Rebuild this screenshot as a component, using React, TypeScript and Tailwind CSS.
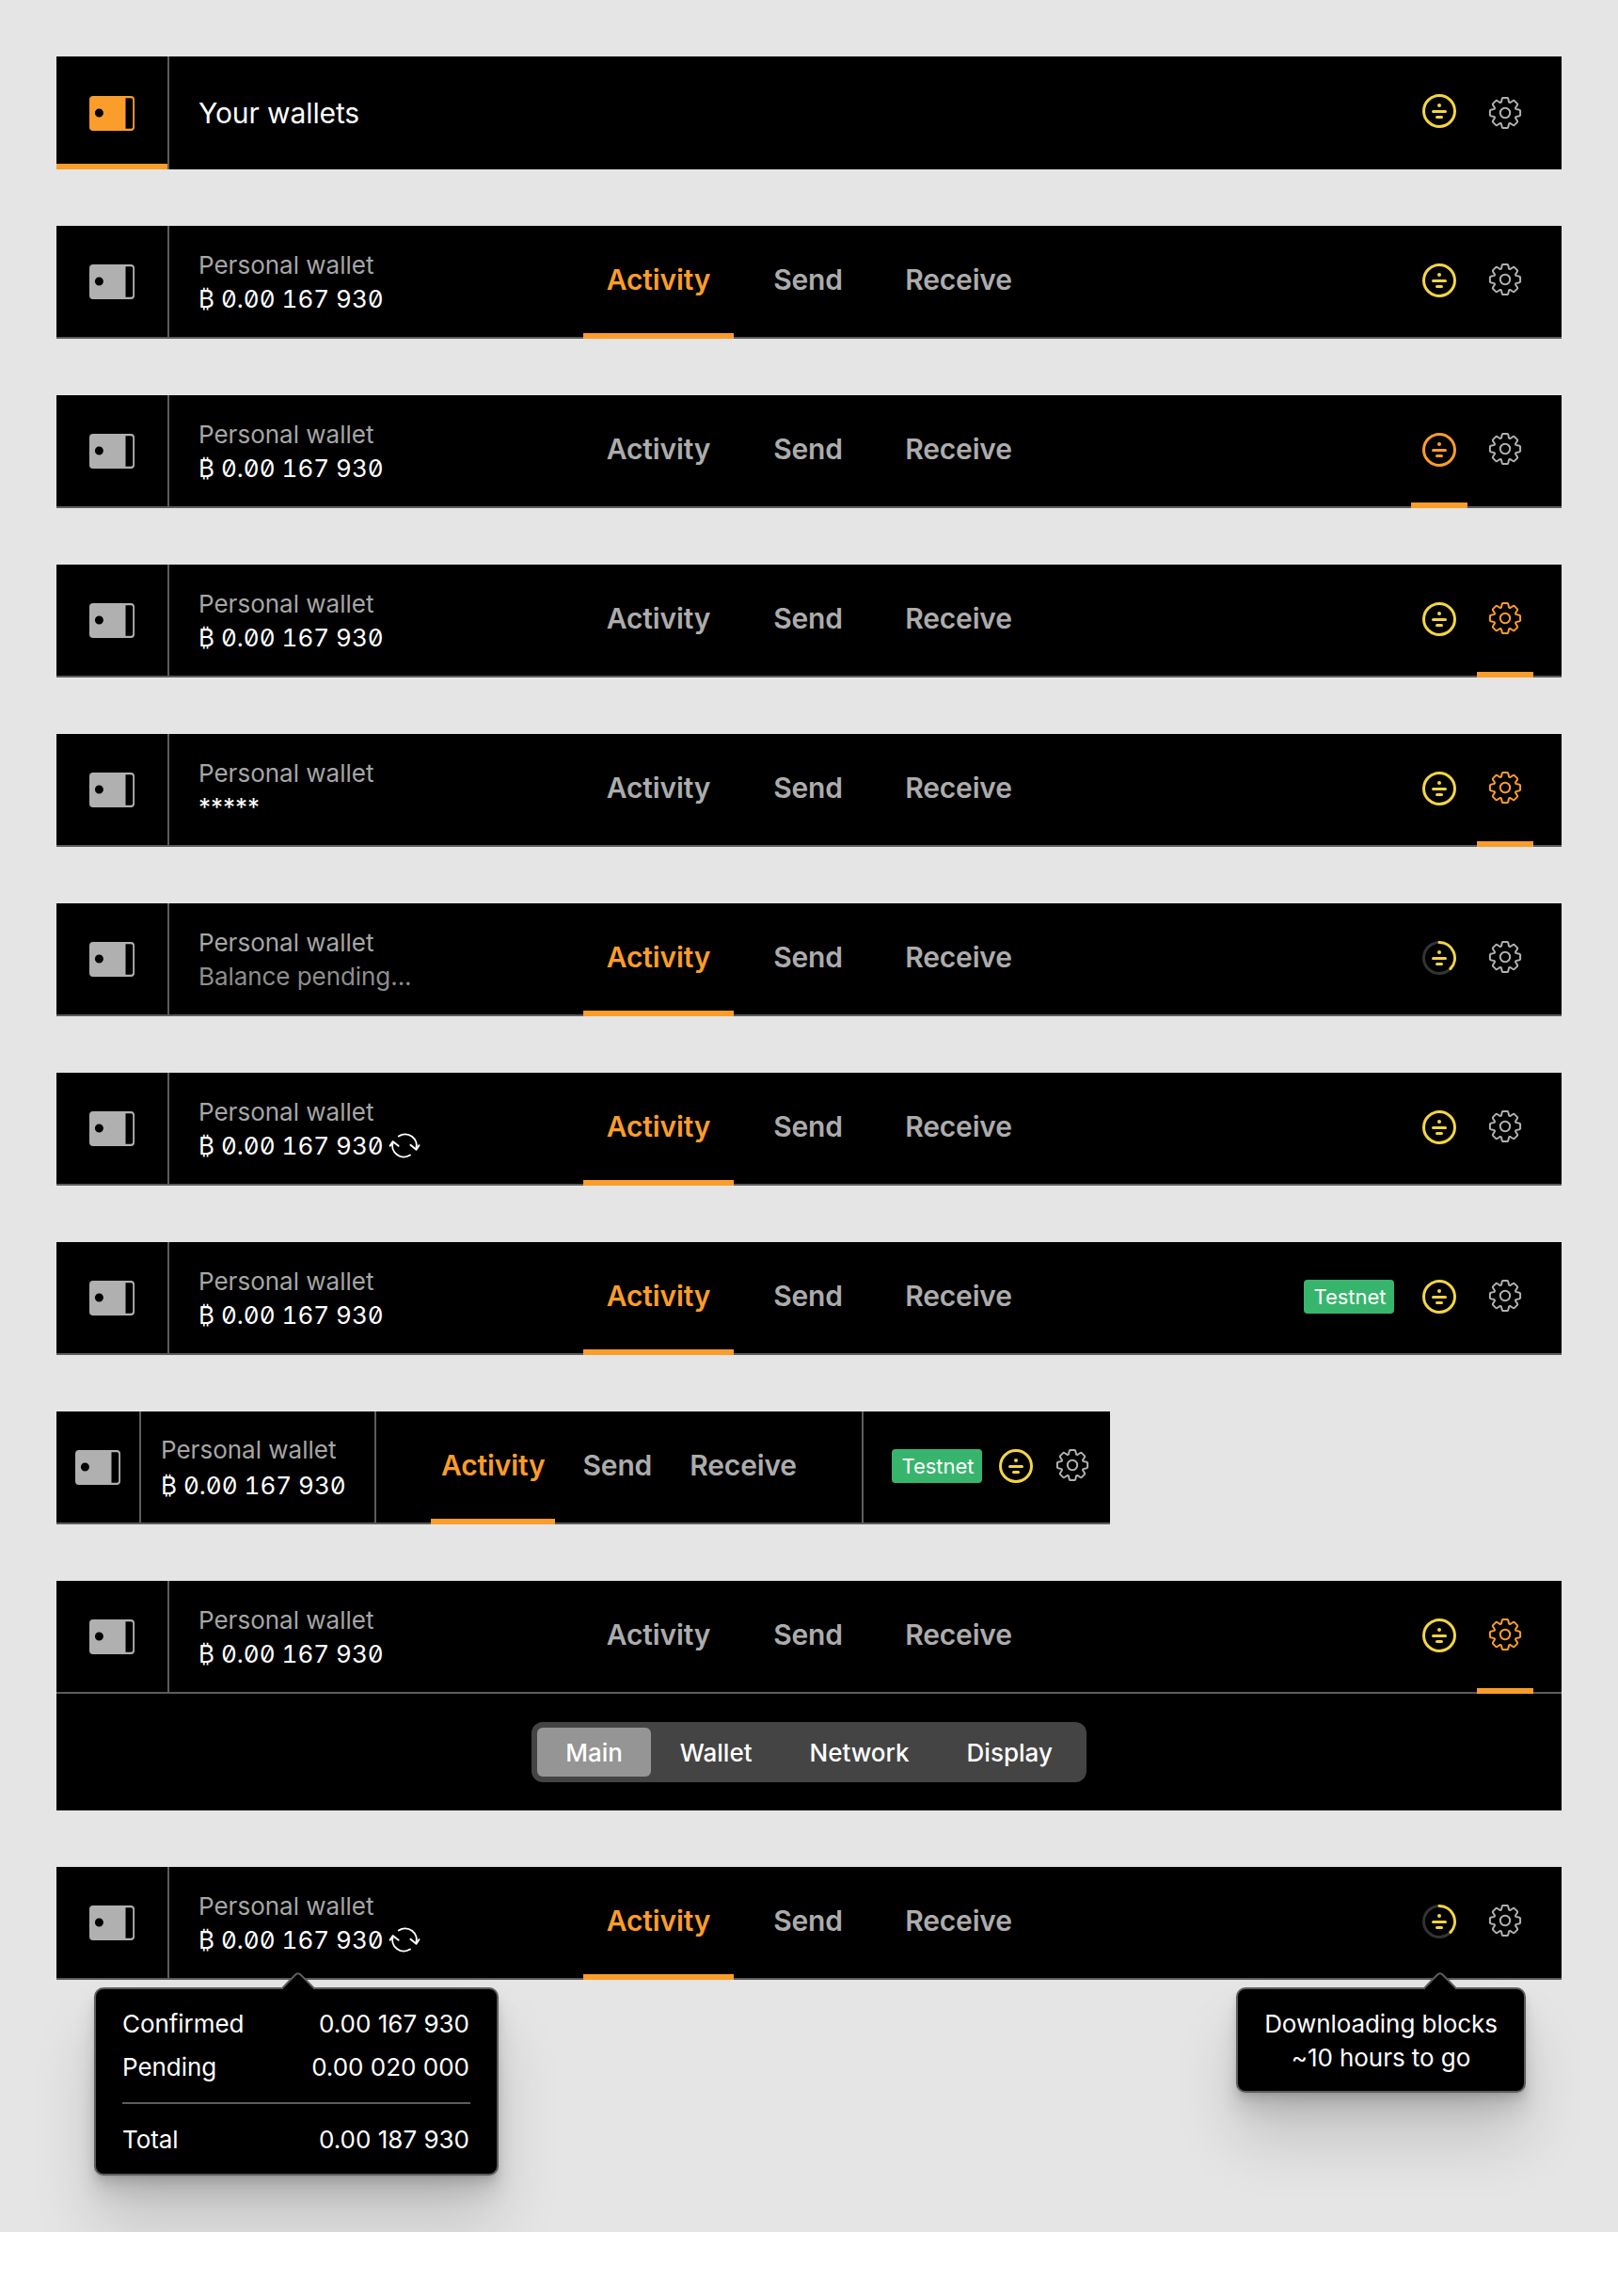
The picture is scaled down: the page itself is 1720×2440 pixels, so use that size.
import type { ReactNode } from 'react'
import clsx from 'clsx'

type Section = 'Activity' | 'Send' | 'Receive'

const SECTIONS: Section[] = ['Activity', 'Send', 'Receive']

function WalletIcon({ className }: { className?: string }) {
  return (
    <svg viewBox="0 0 48 37" className={clsx('h-[37px] w-12', className)} fill="currentColor">
      <path
        fillRule="evenodd"
        d="M4 0H44a4 4 0 0 1 4 4V33a4 4 0 0 1-4 4H4a4 4 0 0 1-4-4V4a4 4 0 0 1 4-4ZM38.5 2.2V34.8H44.2a2 2 0 0 0 2-2V4.2a2 2 0 0 0-2-2ZM10.4 13.5a4.5 4.5 0 1 0 0 9a4.5 4.5 0 0 0 0-9Z"
      />
    </svg>
  )
}

const GEAR_ANGLES = [0, 45, 90, 135, 180, 225, 270, 315]

function gearOutline() {
  const tooth: [number, number][] = [
    [-4.1, -11.4],
    [-3.2, -15.2],
    [-2.5, -16.1],
    [2.5, -16.1],
    [3.2, -15.2],
    [4.1, -11.4],
  ]
  const points = GEAR_ANGLES.flatMap((deg) => {
    const a = (deg * Math.PI) / 180
    return tooth.map(([x, y]) => {
      const px = 17 + x * Math.cos(a) - y * Math.sin(a)
      const py = 17 + x * Math.sin(a) + y * Math.cos(a)
      return `${px.toFixed(2)} ${py.toFixed(2)}`
    })
  })
  return `M${points.join('L')}Z`
}

const GEAR_PATH = gearOutline()

function GearIcon({ className }: { className?: string }) {
  return (
    <svg
      viewBox="0 0 34 34"
      className={clsx('size-[34px] overflow-visible', className)}
      fill="none"
      stroke="currentColor"
      strokeWidth="2"
      strokeLinejoin="round"
    >
      <path d={GEAR_PATH} />
      <circle cx="17" cy="17" r="5.2" />
    </svg>
  )
}

function StatusIcon({ syncing, className }: { syncing?: boolean; className?: string }) {
  return (
    <svg
      viewBox="0 0 36 36"
      className={clsx('size-9', className)}
      fill="none"
      stroke="currentColor"
      strokeWidth="3"
      strokeLinecap="round"
    >
      {syncing ? (
        <>
          <circle cx="18" cy="18" r="16.5" stroke="#333333" />
          <path d="M18 1.5A16.5 16.5 0 0 1 29.9 29.4" />
        </>
      ) : (
        <circle cx="18" cy="18" r="16.5" />
      )}
      <circle cx="18" cy="12" r="2" fill="currentColor" stroke="none" />
      <path d="M11.5 18.5H24.5M15.5 24.5H20.5" />
    </svg>
  )
}

function RefreshIcon() {
  return (
    <svg
      viewBox="0 0 34 28"
      className="h-7 w-[34px]"
      fill="none"
      stroke="currentColor"
      strokeWidth="2"
      strokeLinecap="round"
      strokeLinejoin="round"
    >
      <path d="M10.8 4.5A12.2 12.2 0 0 1 29.3 18.2" />
      <path d="M23.4 13.8L29.5 18.7L32.4 14.2" />
      <path d="M23 24.5A12.2 12.2 0 0 1 4.7 10.6" />
      <path d="M1.7 14.6L4.8 10.2L10.6 14.8" />
    </svg>
  )
}

function TabButton({ label, active, compact }: { label: string; active: boolean; compact?: boolean }) {
  return (
    <button
      className={clsx(
        'relative flex h-full items-center justify-center pb-1.5 text-[30px] leading-9 font-semibold tracking-[-0.15px]',
        compact ? 'px-[11px]' : 'w-40',
        !compact && label !== 'Activity' && 'pr-0.5',
        active ? 'text-[#fb9d2a]' : 'text-[#acacac]',
      )}
    >
      {label}
      {active && <span className="absolute inset-x-0 bottom-0 h-1.5 bg-[#fb9d2a]" />}
    </button>
  )
}

function IconButton({ active, children }: { active?: boolean; children: ReactNode }) {
  return (
    <button className="relative flex h-full w-[60px] items-start justify-center pt-10">
      {children}
      {active && <span className="absolute inset-x-0 bottom-0 h-1.5 bg-[#fb9d2a]" />}
    </button>
  )
}

function TestnetBadge() {
  return (
    <span className="flex h-9 w-24 items-center justify-center rounded-sm bg-[#38b56d] pl-0.5 text-[22px] leading-9 text-white">
      Testnet
    </span>
  )
}

interface WalletSummaryProps {
  hidden?: boolean
  loading?: boolean
  refreshing?: boolean
  className?: string
}

function WalletSummary({ hidden, loading, refreshing, className }: WalletSummaryProps) {
  return (
    <div className={clsx('flex flex-col text-[26px] leading-9', className)}>
      <span className="text-[#a6a6a6]">Personal wallet</span>
      {hidden ? (
        <span className="text-white">*****</span>
      ) : loading ? (
        <span className="tracking-[-0.06px] text-[#8e8e8e]">Balance pending...</span>
      ) : (
        <span className="flex text-white">
          <span className="slashed-zero tabular-nums">₿ 0.00 167 930</span>
          {refreshing && (
            <span className="ml-[5px] pt-[3px]">
              <RefreshIcon />
            </span>
          )}
        </span>
      )}
    </div>
  )
}

interface HeaderProps {
  tab?: Section
  status?: 'idle' | 'active' | 'syncing'
  settingsActive?: boolean
  testnet?: boolean
  summary?: WalletSummaryProps
  children?: ReactNode
}

function Header({ tab, status = 'idle', settingsActive, testnet, summary, children }: HeaderProps) {
  return (
    <header className="relative flex h-[120px] bg-black shadow-[inset_0_-2px_0_#5c5c5c]">
      <div className="flex w-[120px] justify-center border-r-2 border-[#5c5c5c] pt-[41px]">
        <WalletIcon className="ml-[-1px] text-[#b0b0b0]" />
      </div>
      <WalletSummary {...summary} className="w-[440px] pt-6 pl-[31px]" />
      <nav className="flex">
        {SECTIONS.map((s) => (
          <TabButton key={s} label={s} active={s === tab} />
        ))}
      </nav>
      <div className="ml-auto flex gap-2.5 pr-[30px]">
        {testnet && (
          <div className="mr-2 pt-10">
            <TestnetBadge />
          </div>
        )}
        <IconButton active={status === 'active'}>
          <StatusIcon
            syncing={status === 'syncing'}
            className={status === 'active' ? 'text-[#fb9d2a]' : 'text-[#f4d544]'}
          />
        </IconButton>
        <IconButton active={settingsActive}>
          <GearIcon className={settingsActive ? 'text-[#fb9d2a]' : 'text-[#b0b0b0]'} />
        </IconButton>
      </div>
      {children}
    </header>
  )
}

function WalletsHeader() {
  return (
    <header className="flex h-[120px] bg-black">
      <div className="relative flex w-[120px] justify-center border-r-2 border-[#5c5c5c] pt-[42px]">
        <WalletIcon className="ml-[-1px] text-[#fb9d2a]" />
        <span className="absolute inset-x-0 bottom-0 h-1.5 bg-[#fb9d2a]" />
      </div>
      <h1 className="flex items-center pl-[31px] text-[30px] tracking-[-0.1px] text-white">Your wallets</h1>
      <div className="ml-auto flex gap-2.5 pr-[30px]">
        <IconButton>
          <StatusIcon className="text-[#f4d544]" />
        </IconButton>
        <IconButton>
          <GearIcon className="mt-[3px] text-[#b0b0b0]" />
        </IconButton>
      </div>
    </header>
  )
}

function CompactHeader() {
  return (
    <header className="flex h-[120px] w-[1120px] bg-black shadow-[inset_0_-2px_0_#5c5c5c]">
      <div className="w-[90px] border-r-2 border-[#5c5c5c] pt-[41px] pl-5">
        <WalletIcon className="text-[#b0b0b0]" />
      </div>
      <WalletSummary className="w-[250px] gap-0.5 border-r-2 border-[#5c5c5c] pt-[23px] pl-[21px]" />
      <nav className="flex flex-1 justify-center gap-[18px]">
        {SECTIONS.map((s) => (
          <TabButton key={s} label={s} active={s === 'Activity'} compact />
        ))}
      </nav>
      <div className="flex w-[264px] items-start border-l-2 border-[#5c5c5c] pt-10 pl-[30px]">
        <TestnetBadge />
        <StatusIcon className="ml-[18px] text-[#f4d544]" />
        <GearIcon className="ml-[25px] text-[#b0b0b0]" />
      </div>
    </header>
  )
}

function SegmentedControl() {
  return (
    <div className="flex h-16 rounded-xl bg-[#444444] p-1.5 text-[26px] font-medium text-white">
      {['Main', 'Wallet', 'Network', 'Display'].map((label, i) => (
        <button
          key={label}
          className={clsx('flex items-center rounded-md px-[30.5px]', i === 0 && 'bg-[#959595]')}
        >
          {label}
        </button>
      ))}
    </div>
  )
}

function Tooltip({ className, children }: { className: string; children: ReactNode }) {
  return (
    <div
      className={clsx(
        'absolute top-32 rounded-[10px] border-2 border-[#5c5c5c] bg-black text-[26px] leading-9 tracking-[-0.06px] text-white',
        'shadow-[0_2px_2px_rgba(0,0,0,0.06),0_7px_9px_rgba(0,0,0,0.10),0_18px_22px_rgba(0,0,0,0.10),0_50px_66px_rgba(0,0,0,0.15)]',
        className,
      )}
    >
      <svg viewBox="0 0 38 22" className="absolute -top-5 left-[196px] h-[22px] w-[38px]">
        <path d="M2 19.3L15.3 5.2Q18.8 1.5 22.3 5.2L36 19.3V22H2Z" fill="#000000" />
        <path d="M1.4 19.6L15.3 5.2Q18.8 1.5 22.3 5.2L36.4 19.6" fill="none" stroke="#5c5c5c" strokeWidth="2" />
      </svg>
      {children}
    </div>
  )
}

function BalanceRow({ label, value }: { label: string; value: string }) {
  return (
    <div className="flex justify-between pr-px">
      <span>{label}</span>
      <span className="tracking-normal">{value}</span>
    </div>
  )
}

export default function App() {
  return (
    <main className="flex h-[2372px] w-[1720px] flex-col gap-[60px] bg-[#e5e5e5] p-[60px] pb-0 font-[Inter,sans-serif]">
      <WalletsHeader />
      <Header tab="Activity" />
      <Header status="active" />
      <Header settingsActive />
      <Header settingsActive summary={{ hidden: true }} />
      <Header tab="Activity" status="syncing" summary={{ loading: true }} />
      <Header tab="Activity" summary={{ refreshing: true }} />
      <Header tab="Activity" testnet />
      <CompactHeader />
      <section>
        <Header settingsActive />
        <div className="flex h-[124px] items-center justify-center bg-black">
          <SegmentedControl />
        </div>
      </section>
      <Header tab="Activity" status="syncing" summary={{ refreshing: true }}>
        <Tooltip className="left-10 h-[200px] w-[430px] px-7 pt-[19px]">
          <div className="flex flex-col gap-2.5">
            <BalanceRow label="Confirmed" value="0.00 167 930" />
            <BalanceRow label="Pending" value="0.00 020 000" />
          </div>
          <hr className="mt-[19px] mb-5 border-t-2 border-[#5c5c5c]" />
          <BalanceRow label="Total" value="0.00 187 930" />
        </Tooltip>
        <Tooltip className="left-[1254px] h-28 w-[308px] pt-[19px] text-center">
          Downloading blocks
          <br />
          ~10 hours to go
        </Tooltip>
      </Header>
    </main>
  )
}
